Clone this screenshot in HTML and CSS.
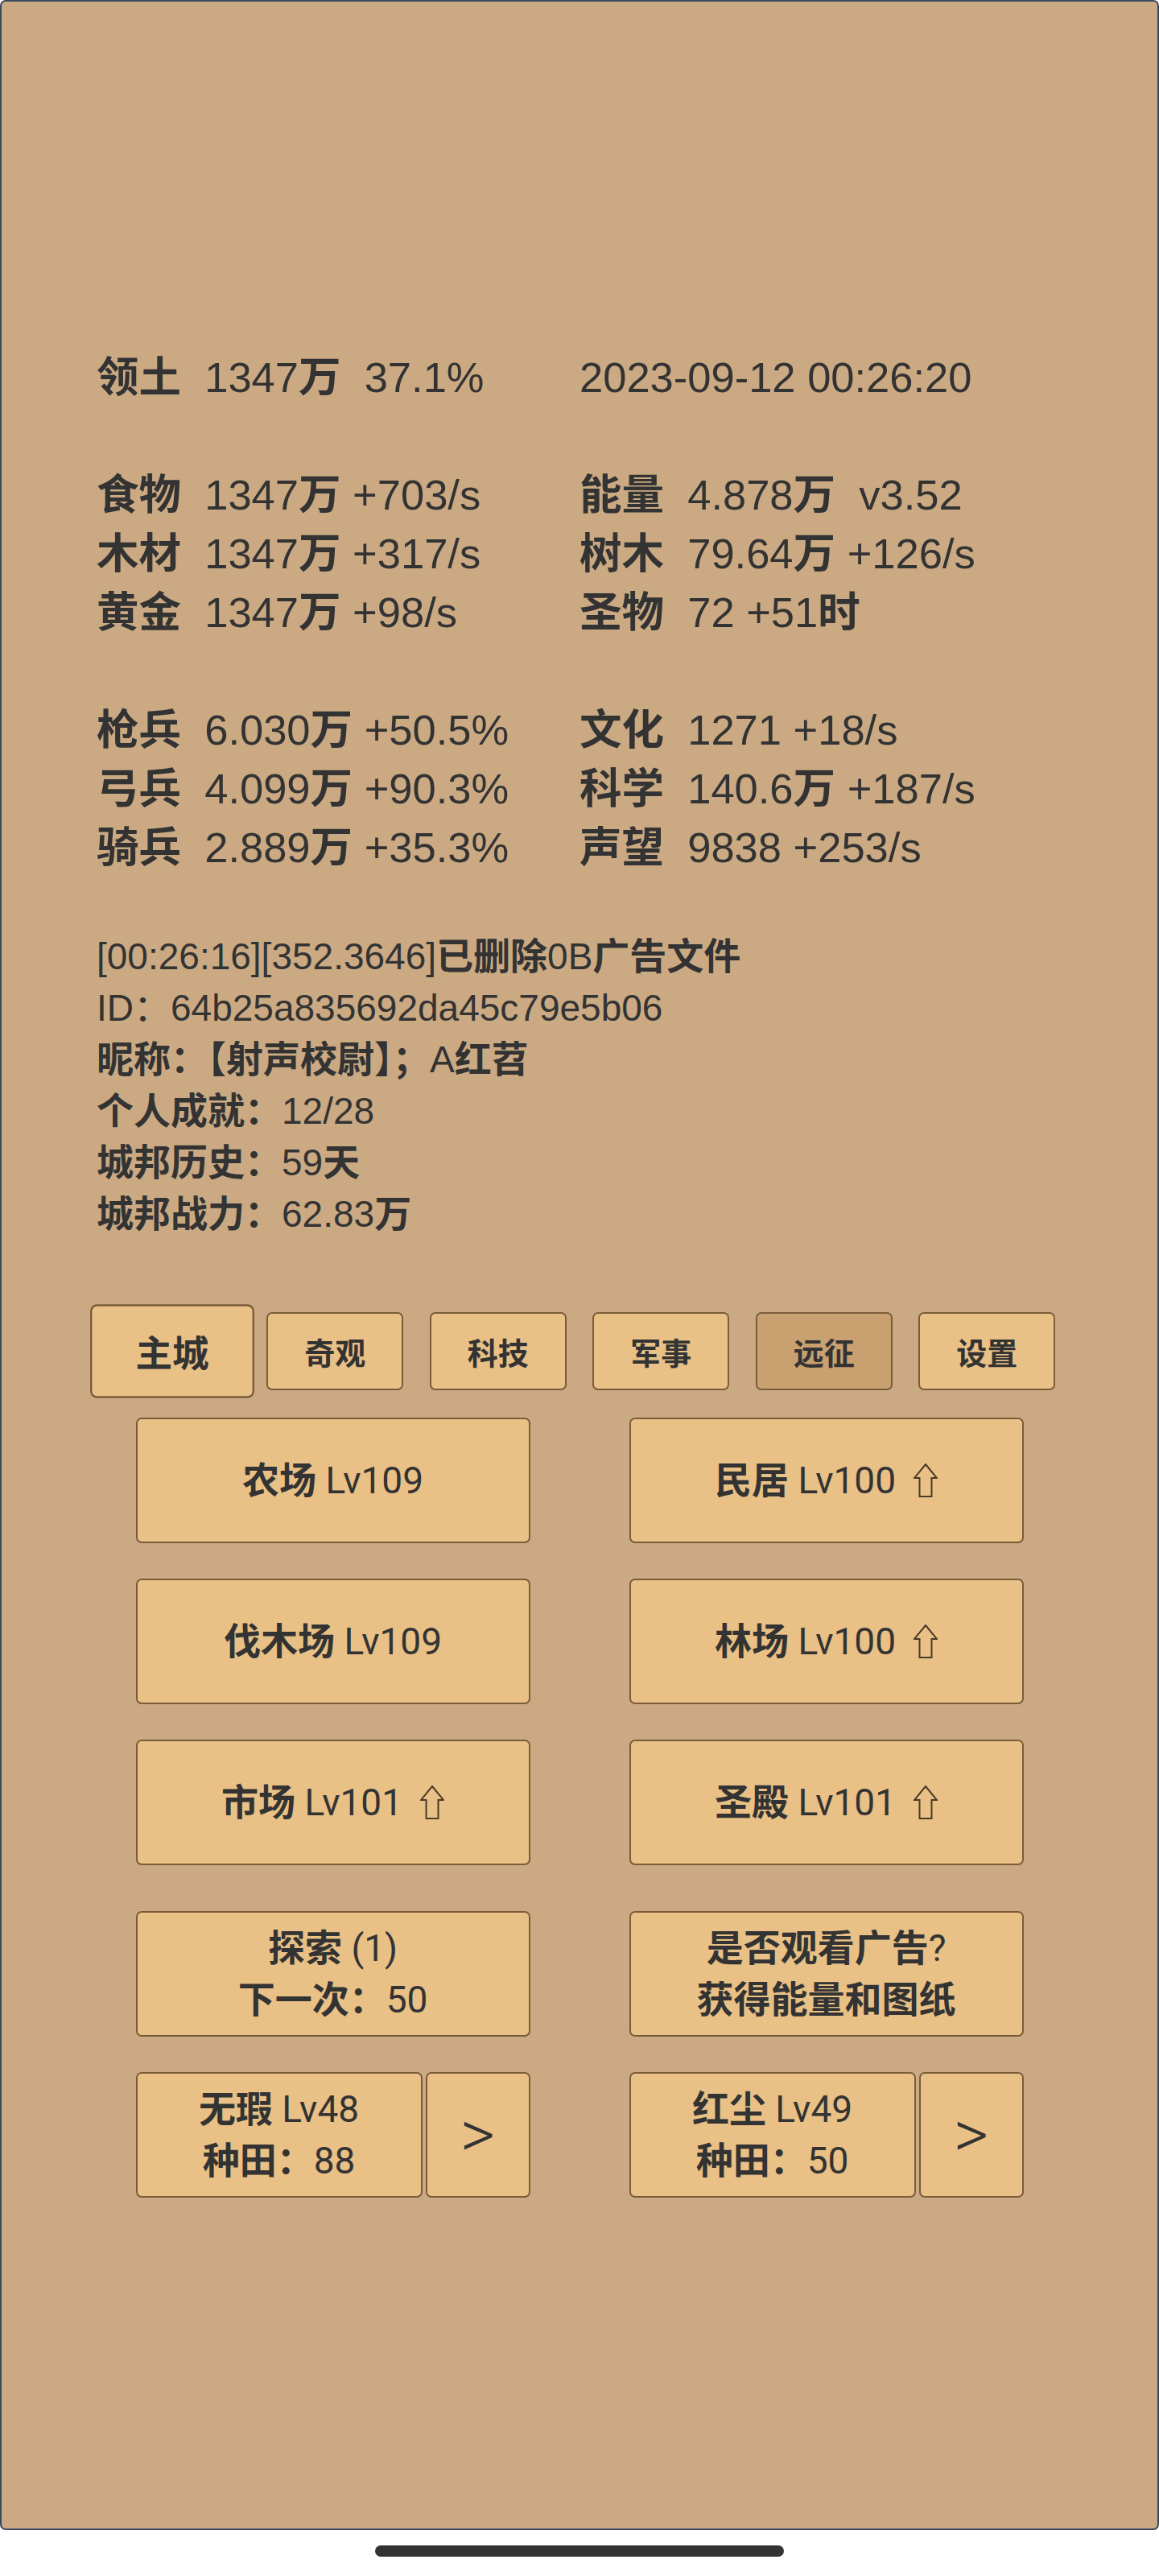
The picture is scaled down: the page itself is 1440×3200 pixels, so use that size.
FILE: index.html
```html
<!DOCTYPE html>
<html lang="zh-CN">
<head>
<meta charset="utf-8">
<title>城邦</title>
<link rel="stylesheet" href="styles.css">
</head>
<body>
<div class="frame">
  <div class="stats">
    <div class="col">
      <div class="ln"><b>领土</b>  1347<b>万</b>  37.1%</div>
      <div class="ln"> </div>
      <div class="ln"><b>食物</b>  1347<b>万</b> +703/s</div>
      <div class="ln"><b>木材</b>  1347<b>万</b> +317/s</div>
      <div class="ln"><b>黄金</b>  1347<b>万</b> +98/s</div>
      <div class="ln"> </div>
      <div class="ln"><b>枪兵</b>  6.030<b>万</b> +50.5%</div>
      <div class="ln"><b>弓兵</b>  4.099<b>万</b> +90.3%</div>
      <div class="ln"><b>骑兵</b>  2.889<b>万</b> +35.3%</div>
    </div>
    <div class="col">
      <div class="ln">2023-09-12 00:26:20</div>
      <div class="ln"> </div>
      <div class="ln"><b>能量</b>  4.878<b>万</b>  v3.52</div>
      <div class="ln"><b>树木</b>  79.64<b>万</b> +126/s</div>
      <div class="ln"><b>圣物</b>  72 +51<b>时</b></div>
      <div class="ln"> </div>
      <div class="ln"><b>文化</b>  1271 +18/s</div>
      <div class="ln"><b>科学</b>  140.6<b>万</b> +187/s</div>
      <div class="ln"><b>声望</b>  9838 +253/s</div>
    </div>
  </div>

  <div class="info">
    <div>[00:26:16][352.3646]<b>已删除</b>0B<b>广告文件</b></div>
    <div>ID：64b25a835692da45c79e5b06</div>
    <div><b>昵称：【射声校尉】；</b>A<b>红苕</b></div>
    <div><b>个人成就：</b>12/28</div>
    <div><b>城邦历史：</b>59<b>天</b></div>
    <div><b>城邦战力：</b>62.83<b>万</b></div>
  </div>

  <div class="tabs">
    <div class="tab big">主城</div>
    <div class="tab">奇观</div>
    <div class="tab">科技</div>
    <div class="tab">军事</div>
    <div class="tab on">远征</div>
    <div class="tab">设置</div>
  </div>

  <div class="grid">
    <div class="btn"><div class="l"><b>农场</b> Lv109</div></div>
    <div class="btn"><div class="l"><b>民居</b> Lv100<svg class="up" viewBox="0 0 30 42" width="30" height="42"><path d="M15 1 L29 18 L22.5 18 L22.5 41 L7.5 41 L7.5 18 L1 18 Z"/></svg></div></div>
    <div class="btn"><div class="l"><b>伐木场</b> Lv109</div></div>
    <div class="btn"><div class="l"><b>林场</b> Lv100<svg class="up" viewBox="0 0 30 42" width="30" height="42"><path d="M15 1 L29 18 L22.5 18 L22.5 41 L7.5 41 L7.5 18 L1 18 Z"/></svg></div></div>
    <div class="btn"><div class="l"><b>市场</b> Lv101<svg class="up" viewBox="0 0 30 42" width="30" height="42"><path d="M15 1 L29 18 L22.5 18 L22.5 41 L7.5 41 L7.5 18 L1 18 Z"/></svg></div></div>
    <div class="btn"><div class="l"><b>圣殿</b> Lv101<svg class="up" viewBox="0 0 30 42" width="30" height="42"><path d="M15 1 L29 18 L22.5 18 L22.5 41 L7.5 41 L7.5 18 L1 18 Z"/></svg></div></div>
  </div>

  <div class="grid grid2">
    <div class="btn"><div class="l"><b>探索</b> (1)</div><div class="l"><b>下一次：</b>50</div></div>
    <div class="btn"><div class="l"><b>是否观看广告</b>?</div><div class="l"><b>获得能量和图纸</b></div></div>
    <div class="pair">
      <div class="btn main"><div class="l"><b>无瑕</b> Lv48</div><div class="l"><b>种田：</b>88</div></div>
      <div class="btn next">&gt;</div>
    </div>
    <div class="pair">
      <div class="btn main"><div class="l"><b>红尘</b> Lv49</div><div class="l"><b>种田：</b>50</div></div>
      <div class="btn next">&gt;</div>
    </div>
  </div>
</div>
<div class="homebar"></div>
</body>
</html>
```

FILE: styles.css
```css
html, body {
  margin: 0;
  padding: 0;
  background: #ffffff;
}

body {
  font-family: Roboto, "Noto Sans CJK SC", sans-serif;
  color: #333333;
}

b {
  font-weight: 700;
}

.frame {
  height: 3143px;
  box-sizing: border-box;
  border: 2px solid #3b4862;
  border-radius: 7px;
  background: #cbaa83;
  padding-top: 430px;
  overflow: hidden;
}

.stats {
  display: grid;
  grid-template-columns: 600px 600px;
  margin-left: 118px;
  font-size: 52.5px;
  font-family: "Liberation Sans", "Noto Sans CJK SC", sans-serif;
}

.ln {
  height: 73px;
  line-height: 73px;
  white-space: pre;
}

.info {
  margin: 67px 0 0 118px;
  font-size: 46px;
  line-height: 64px;
  font-family: "Liberation Sans", "Noto Sans CJK SC", sans-serif;
}

.info > div {
  height: 64px;
  white-space: nowrap;
}

.tabs {
  display: flex;
  justify-content: center;
  gap: 32.5px;
  margin-top: 90px;
}

.tab {
  width: 170px;
  height: 97px;
  box-sizing: border-box;
  background: #e9c085;
  border: 2px solid #7a5c3a;
  border-radius: 7px;
  display: flex;
  align-items: center;
  justify-content: center;
  font-size: 38px;
  font-weight: 700;
  font-family: "Noto Sans CJK SC", sans-serif;
}

.tab.big {
  transform: scale(1.2);
}

.tab.on {
  background: #c9a070;
}

.grid {
  display: grid;
  grid-template-columns: 490px 490px;
  column-gap: 123px;
  row-gap: 44px;
  justify-content: center;
  margin-top: 34px;
}

.grid2 {
  margin-top: 57px;
}

.btn {
  height: 156px;
  box-sizing: border-box;
  background: #e9c085;
  border: 2px solid #7a5c3a;
  border-radius: 7px;
  display: flex;
  flex-direction: column;
  align-items: center;
  justify-content: center;
  font-size: 46px;
  font-weight: 400;
  line-height: 64px;
}

.btn .l {
  display: flex;
  align-items: center;
  height: 64px;
  white-space: pre;
}

.up {
  margin-left: 22px;
  fill: none;
  stroke: #4a3b28;
  stroke-width: 2;
}

.pair {
  display: flex;
  gap: 4px;
}

.pair .main {
  width: 356px;
}

.pair .next {
  width: 130px;
  font-size: 84px;
  font-weight: 300;
}

.homebar {
  width: 508px;
  height: 14px;
  margin: 19px auto 0;
  background: #333333;
  border-radius: 7px;
}
```
